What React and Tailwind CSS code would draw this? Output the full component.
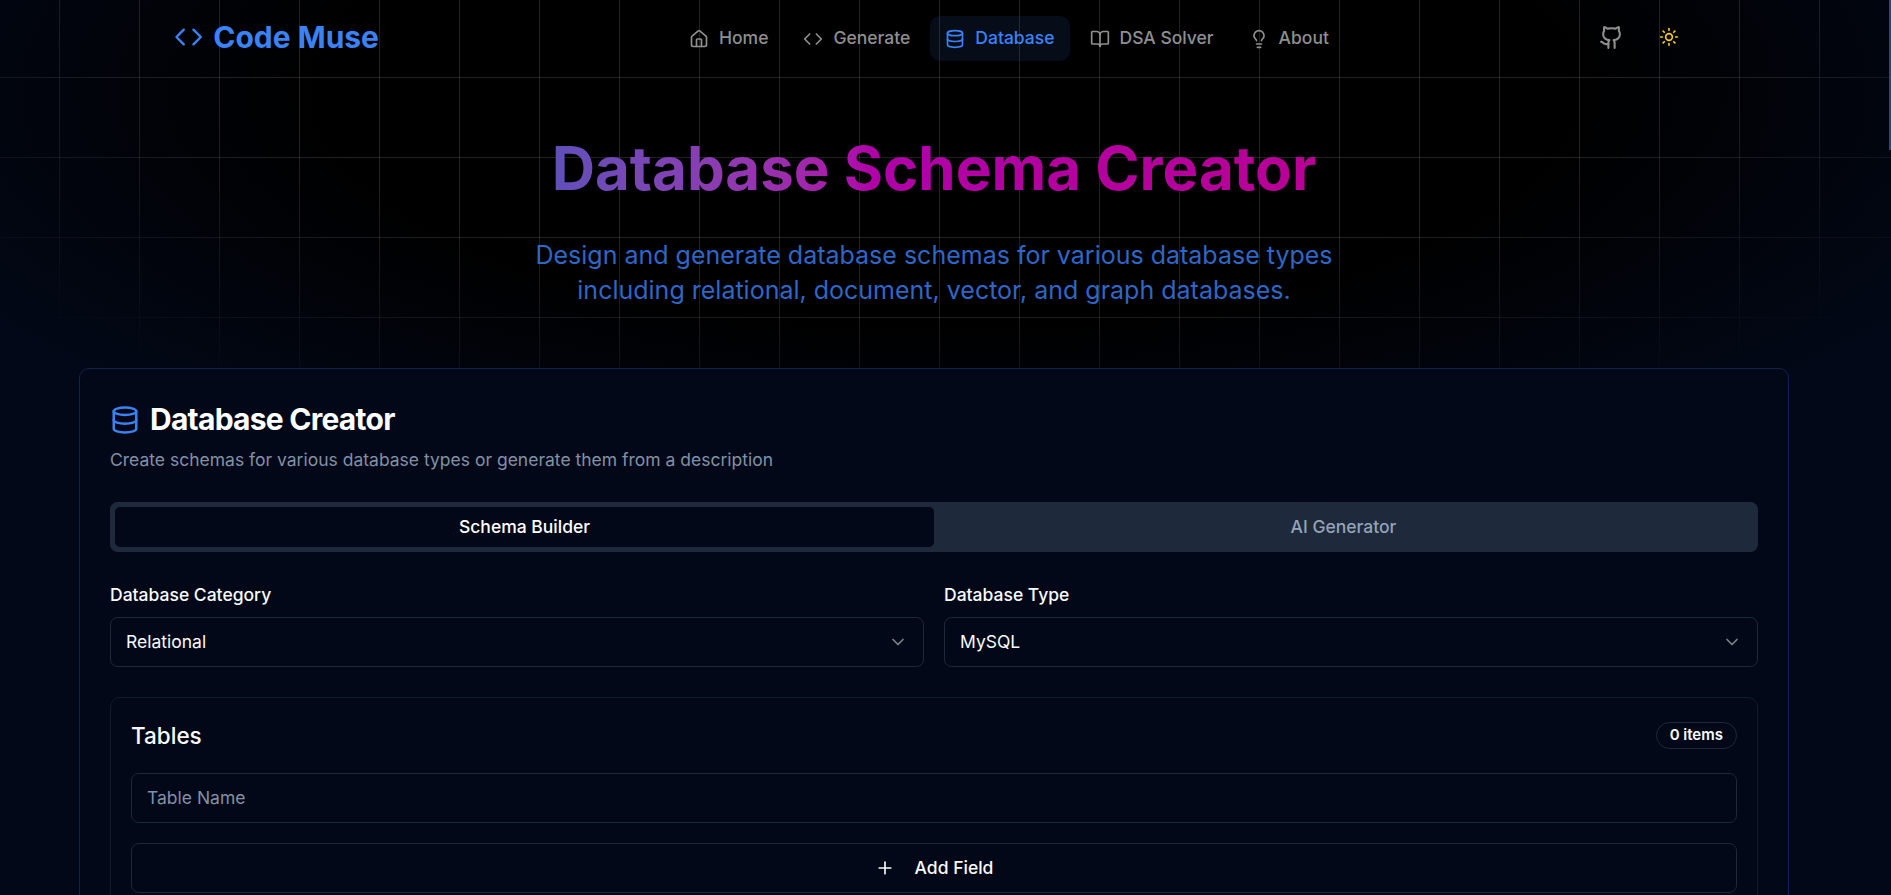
import React from 'react';
import { House, Code, Database, BookOpen, Lightbulb, Github, Sun, ChevronDown, Plus } from 'lucide-react';

const NAV_ITEMS = [
  { name: 'Home', icon: House },
  { name: 'Generate', icon: Code },
  { name: 'Database', icon: Database, active: true },
  { name: 'DSA Solver', icon: BookOpen },
  { name: 'About', icon: Lightbulb },
];

function SelectBox({ label, value }) {
  return (
    <div className="flex flex-col">
      <label className="text-[17.5px] leading-[18px] font-medium text-[#f8fafc] mb-[13px]">{label}</label>
      <button className="flex items-center justify-between h-[50px] pl-[15px] pr-[15px] pt-px rounded-[7.5px] border border-[#1e293b] bg-[#020817] text-[17.5px] text-[#f8fafc]">
        {value}
        <ChevronDown size={20} strokeWidth={2} className="opacity-50" />
      </button>
    </div>
  );
}

function App() {
  return (
    <div className="relative h-screen overflow-hidden font-['Inter',sans-serif] text-[#f8fafc] bg-[radial-gradient(ellipse_60%_48%_at_50%_10%,#000_55%,#020817_100%)]">
      {/* grid behind everything */}
      <div className="absolute inset-0 pointer-events-none bg-[linear-gradient(to_right,rgba(255,255,255,0.13)_1px,transparent_1px),linear-gradient(to_bottom,rgba(255,255,255,0.13)_1px,transparent_1px)] bg-[size:80px_80px] bg-[position:59px_77px] [mask-image:radial-gradient(ellipse_66%_54%_at_50%_0%,#000_60%,transparent_100%)]" />
      <div className="absolute top-0 right-0 w-[2px] h-[150px] bg-[#1e4a8a]" />

      <div className="relative">
        {/* Header */}
        <header className="flex items-center h-[77px] pl-[174px]">
          <div className="flex items-center gap-[10px] w-[205px] shrink-0 mb-[3px] text-[#3b82f6]">
            <Code size={32} strokeWidth={2} />
            <span className="text-[30px] font-bold leading-none whitespace-nowrap">Code Muse</span>
          </div>
          <nav className="flex items-center gap-[5px] ml-[295px]">
            {NAV_ITEMS.map((item) => {
              const Icon = item.icon;
              return (
                <a
                  key={item.name}
                  className={`flex items-center gap-[10px] h-[45px] px-[15px] rounded-[10px] text-[17.5px] font-medium whitespace-nowrap ${
                    item.active ? 'bg-[#3b82f6]/10 text-[#3b82f6]' : 'text-[#8f8f8f]'
                  }`}
                >
                  <Icon size={20} strokeWidth={2} />
                  {item.name}
                </a>
              );
            })}
          </nav>
          <div className="flex items-center gap-[7px] ml-[243px] mb-[3px]">
            <button className="flex items-center justify-center w-[50px] h-[50px] text-[#8f8f8f]">
              <Github size={25} strokeWidth={2} />
            </button>
            <button className="flex items-center justify-center w-[50px] h-[50px] text-[#facc15]">
              <Sun size={20} strokeWidth={2} />
            </button>
          </div>
        </header>

        <main className="w-[1710px] ml-[79px]">
          {/* Hero */}
          <section className="text-center pt-[61px] pb-[60px]">
            <h1 className="text-[60px] leading-[60px] font-bold">
              <span className="bg-gradient-to-r from-[#5f50ba] via-[#b000a8] via-42% to-[#b80095] bg-clip-text text-transparent">
                Database Schema Creator
              </span>
            </h1>
            <p className="mt-[40px] text-[25px] leading-[35px] text-[#2f66c8]">
              Design and generate database schemas for various database types
              <br />
              including relational, document, vector, and graph databases.
            </p>
          </section>

          {/* Creator card */}
          <section className="rounded-[10px] border border-[#0f2350] bg-[#020817] p-[30px]">
            <h2 className="flex items-center gap-[10px] mt-[2px] text-[30px] leading-[37.5px] font-bold tracking-tight text-white">
              <Database size={30} strokeWidth={2} className="text-[#3b82f6]" />
              Database Creator
            </h2>
            <p className="mt-[8px] text-[17.5px] leading-[25px] text-[#8290a6]">
              Create schemas for various database types or generate them from a description
            </p>

            <div className="grid grid-cols-2 h-[50px] mt-[30px] p-[5px] rounded-[7.5px] bg-[#1e293b] text-[17.5px] font-medium">
              <div className="flex items-center justify-center pt-px rounded-[5px] bg-[#020817] text-white">Schema Builder</div>
              <div className="flex items-center justify-center pt-px text-[#94a3b8]">AI Generator</div>
            </div>

            <div className="grid grid-cols-2 gap-[20px] mt-[34px]">
              <SelectBox label="Database Category" value="Relational" />
              <SelectBox label="Database Type" value="MySQL" />
            </div>

            <div className="mt-[30px] rounded-[10px] border border-[#111b2e] px-[20px] pt-[24px] pb-[24px]">
              <div className="flex items-center justify-between h-[27px]">
                <h3 className="pt-px text-[22.5px] font-medium text-[#f8fafc]">Tables</h3>
                <span className="flex items-center h-[27px] px-[13px] rounded-full border border-[#1e293b] text-[15px] font-semibold text-[#f8fafc]">
                  0 items
                </span>
              </div>
              <input
                placeholder="Table Name"
                className="block w-full h-[50px] mt-[24px] px-[15px] rounded-[7.5px] border border-[#1e293b] bg-[#020817] text-[17.5px] placeholder:text-[#8290a6] outline-none"
              />
              <button className="flex items-center justify-center gap-[20px] w-full h-[50px] mt-[20px] pt-px rounded-[7.5px] border border-[#1e293b] bg-[#020817] text-[17.5px] font-medium text-[#f8fafc]">
                <Plus size={20} strokeWidth={2} />
                Add Field
              </button>
            </div>
          </section>
        </main>
      </div>
    </div>
  );
}

export default App;
